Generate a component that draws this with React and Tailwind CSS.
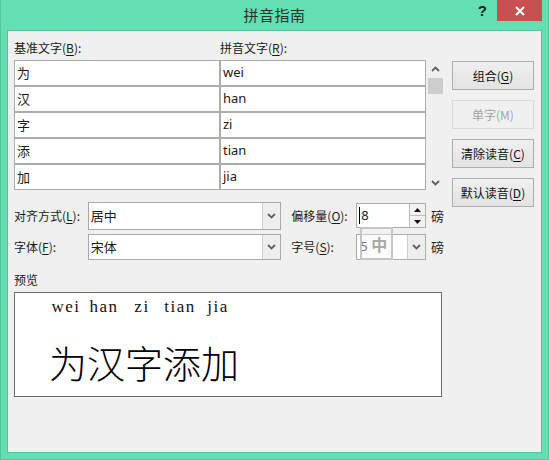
import React from "react";

const Chevron = ({ up = false, className = "" }) => (
  <svg width="9" height="6" viewBox="0 0 9 6" className={className}>
    <polyline
      points={up ? "1,5 4.5,1.5 8,5" : "1,1 4.5,4.5 8,1"}
      fill="none"
      stroke="#606060"
      strokeWidth="1.8"
    />
  </svg>
);

const U = ({ children }) => <span className="underline underline-offset-2">{children}</span>;

const rows = [
  ["为", "wei"],
  ["汉", "han"],
  ["字", "zi"],
  ["添", "tian"],
  ["加", "jia"],
];

const Btn = ({ children, disabled }) => (
  <div
    className={
      disabled
        ? "h-[29px] flex items-center justify-center border border-[#d9d9d9] bg-[#f0f0f0] text-[#a3a3a3] text-[12px]"
        : "h-[29px] flex items-center justify-center border border-[#adadad] bg-gradient-to-b from-[#f0f0f0] to-[#e3e3e3] text-[#111] text-[12px]"
    }
  >
    {children}
  </div>
);

const DropArrow = () => (
  <div className="w-[18px] h-full flex items-center justify-center bg-[#eeeeee] border-l border-[#cfcfcf]">
    <Chevron />
  </div>
);

export default function App() {
  return (
    <div className="w-[549px] h-[460px] bg-[#63dfb3] border-x border-b border-[#52c79d] flex flex-col font-['Noto_Sans_CJK_SC',sans-serif] text-[#1a1a1a]">
      {/* title bar */}
      <div className="h-[30px] grid grid-cols-[1fr_auto_1fr] shrink-0">
        <div />
        <div className="flex items-center text-[15px] text-[#26352f] tracking-[0.5px]">拼音指南</div>
        <div className="flex justify-end items-start">
          <div className="mt-[3px] mr-[10px] text-[15px] font-bold text-[#222] leading-[16px] font-['Liberation_Sans',sans-serif]">?</div>
          <div className="w-[45px] h-[21px] mr-[6px] bg-[#c75050] flex items-center justify-center">
            <svg width="10" height="10" viewBox="0 0 10 10">
              <path d="M1 1 L9 9 M9 1 L1 9" stroke="#fff" strokeWidth="2" />
            </svg>
          </div>
        </div>
      </div>

      {/* content */}
      <div className="flex-1 mx-[6px] mb-[6px] border border-[#53c59c] bg-[#f0f0f0] flex pl-[6px]">
        {/* left column */}
        <div className="w-[430px] shrink-0 flex flex-col">
          <div className="h-[29px] pt-[10px] flex text-[12px] leading-[14px]">
            <div className="w-[206px]">基准文字(<U>B</U>):</div>
            <div>拼音文字(<U>R</U>):</div>
          </div>

          <div className="flex">
            <div className="w-[412px] bg-[#acacac] p-[1px] grid grid-cols-[204px_204px] gap-[2px]">
              {rows.map(([a, b]) => (
                <React.Fragment key={a}>
                  <div className="h-[24px] bg-white pl-[2px] flex items-center text-[13px]">{a}</div>
                  <div className="h-[24px] bg-white pl-[2px] flex items-center text-[13px] font-['Noto_Sans',sans-serif]">{b}</div>
                </React.Fragment>
              ))}
            </div>
            <div className="w-[18px] h-[130px] flex flex-col items-center">
              <div className="h-[18px] flex items-center justify-center">
                <Chevron up />
              </div>
              <div className="w-[15px] h-[16px] bg-[#cdcdcd] ml-[1px]" />
              <div className="flex-1" />
              <div className="h-[14px] flex items-center justify-center">
                <Chevron />
              </div>
            </div>
          </div>

          {/* row 1 */}
          <div className="mt-[12px] h-[28px] flex items-start text-[12px] shrink-0">
            <div className="w-[74px] h-[28px] flex items-center">对齐方式(<U>L</U>):</div>
            <div className="w-[194px] h-[28px] border border-[#a8a8a8] bg-white flex">
              <div className="flex-1 pl-[2px] flex items-center text-[13px]">居中</div>
              <DropArrow />
            </div>
            <div className="ml-[10px] w-[65px] h-[28px] flex items-center">偏移量(<U>O</U>):</div>
            <div className="mt-[1px] w-[70px] h-[25px] border border-[#acacac] bg-white flex">
              <div className="flex-1 flex items-center pl-[2px] text-[13px] font-['Noto_Sans',sans-serif]">
                <span className="w-px h-[17px] bg-black mr-px" />8
              </div>
              <div className="w-[16px] flex flex-col border-l border-[#bdbdbd] bg-[#f2f2f2]">
                <div className="flex-1 flex items-center justify-center border-b border-[#bdbdbd]">
                  <svg width="7" height="4" viewBox="0 0 7 4"><polygon points="0,4 3.5,0 7,4" fill="#111" /></svg>
                </div>
                <div className="flex-1 flex items-center justify-center">
                  <svg width="7" height="4" viewBox="0 0 7 4"><polygon points="0,0 3.5,4 7,0" fill="#111" /></svg>
                </div>
              </div>
            </div>
            <div className="ml-[5px] h-[28px] flex items-center text-[13px]">磅</div>
          </div>

          {/* row 2 */}
          <div className="mt-[4px] h-[26px] flex items-start text-[12px] shrink-0">
            <div className="w-[74px] h-[26px] flex items-center">字体(<U>F</U>):</div>
            <div className="w-[194px] h-[26px] border border-[#a8a8a8] bg-white flex">
              <div className="flex-1 pl-[2px] flex items-center text-[13px]">宋体</div>
              <DropArrow />
            </div>
            <div className="ml-[10px] w-[65px] h-[26px] flex items-center">字号(<U>S</U>):</div>
            <div className="relative w-[70px] h-[26px] border border-[#acacac] bg-white flex">
              <div className="flex-1 flex items-center pl-[3px] text-[13px] font-['Noto_Sans',sans-serif]">5</div>
              <DropArrow />
              <div className="absolute left-[3px] top-[-8px] w-[33px] h-[33px] border-2 border-[#c6c6c6] bg-[#f4f4f4]/40 flex items-center pl-[9px] text-[16px] font-bold text-[#a8a8a8]">
                中
              </div>
            </div>
            <div className="ml-[5px] h-[26px] flex items-center text-[13px]">磅</div>
          </div>

          <div className="mt-[12px] text-[12px] leading-[16px]">预览</div>
          <div className="mt-[4px] w-[428px] h-[105px] border border-[#6a6a6a] bg-white pl-[34px] pt-[5px] flex flex-col">
            <div className="-ml-[2px] flex font-['Liberation_Serif',serif] text-[17px] leading-[18px] tracking-[1.5px] text-[#111]">
              {rows.map(([a, b]) => (
                <div key={a} className="w-[38px] flex justify-center whitespace-nowrap">{b}</div>
              ))}
            </div>
            <div className="mt-[26px] flex text-[38px] leading-[40px] font-light text-black">
              {rows.map(([a]) => (
                <div key={a} className="w-[38px] text-center">{a}</div>
              ))}
            </div>
          </div>
        </div>

        {/* buttons */}
        <div className="ml-[8px] w-[82px] pt-[30px] flex flex-col gap-[10px]">
          <Btn>组合(<U>G</U>)</Btn>
          <Btn disabled>单字(M)</Btn>
          <Btn>清除读音(<U>C</U>)</Btn>
          <Btn>默认读音(<U>D</U>)</Btn>
        </div>
      </div>
    </div>
  );
}
